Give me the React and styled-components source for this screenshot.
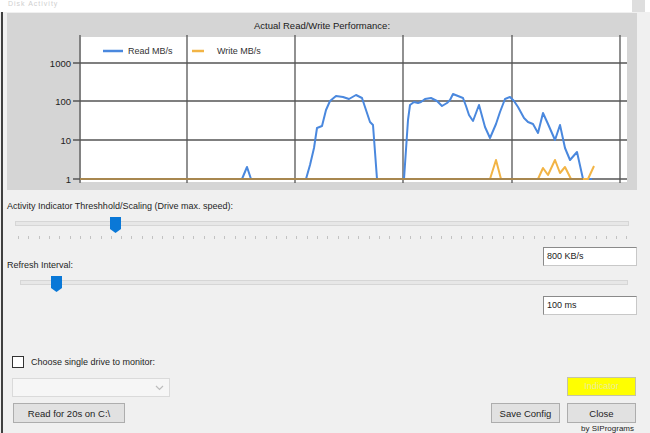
import React from 'react';
import styled, { createGlobalStyle } from 'styled-components';

const GlobalStyle = createGlobalStyle`
  html, body { margin: 0; padding: 0; background: #f0f0f0; overflow: hidden; }
  body { font-family: "Liberation Sans", Arial, sans-serif; }
  * { box-sizing: border-box; }
`;

const Window = styled.div`
  width: 650px;
  height: 433px;
  overflow: hidden;
  display: flex;
  flex-direction: column;
  background: #f0f0f0;
  color: #1e1e1e;
  font-size: 9px;
`;

const TitleBar = styled.div`
  height: 12px;
  flex: none;
  background: #ffffff;
  display: flex;
  align-items: flex-start;
  justify-content: space-between;
  overflow: hidden;
`;

const TitleText = styled.span`
  margin: 0 0 0 8px;
  font-size: 7px;
  line-height: 8px;
  color: #cfcfcf;
  letter-spacing: 1px;
`;

const TitleButton = styled.span`
  width: 13px;
  height: 12px;
  margin-right: 5px;
  background: #dedede;
`;

const Body = styled.div`
  flex: 1;
  display: flex;
  min-height: 0;
  margin-left: 1px;
  border-left: 2px solid #404040;
`;

const Content = styled.div`
  width: 630px;
  margin-left: 4px;
  display: flex;
  flex-direction: column;
`;

const ChartPanel = styled.div`
  margin-top: 1px;
  height: 177px;
  background: #d5d5d5;
  display: flex;
  flex-direction: column;
`;

const ChartTitle = styled.div`
  height: 22px;
  padding-top: 4px;
  line-height: 18px;
  text-align: center;
  font-size: 9.5px;
  color: #1a1a1a;
`;

const ChartSvg = styled.svg`
  display: block;
  width: 630px;
  height: 155px;
  font-family: "Liberation Sans", Arial, sans-serif;
`;

const SettingLabel = styled.div`
  margin-top: ${p => p.$mt || 0}px;
  margin-bottom: ${p => p.$mb || 0}px;
  line-height: 12px;
  height: 12px;
  white-space: nowrap;
`;

const SliderBox = styled.div`
  position: relative;
  height: ${p => p.$h}px;
  padding-top: ${p => p.$pt}px;
`;

const Track = styled.div`
  height: 5px;
  margin: 0 ${p => p.$r}px 0 ${p => p.$l}px;
  background: #e7e7e7;
  border: 1px solid #d6d6d6;
`;

const TickRow = styled.div`
  display: flex;
  justify-content: ${p => (p.$gap ? 'flex-start' : 'space-between')};
  gap: ${p => (p.$gap ? p.$gap - 1 : 0)}px;
  margin: ${p => p.$mt}px ${p => p.$r}px 0 ${p => p.$l}px;
  height: 3px;
`;

const Tick = styled.span`
  width: 1px;
  height: 3px;
  background: #c2c2c2;
  margin-left: ${p => (p.$last ? 'auto' : '0')};
`;

const ThumbSvg = styled.svg`
  position: absolute;
  top: ${p => p.$top}px;
  width: 11px;
  height: 16px;
`;

const FieldRow = styled.div`
  display: flex;
  justify-content: ${p => p.$justify || 'space-between'};
  align-items: flex-end;
  height: 19px;
  margin-top: ${p => p.$mt}px;
`;

const TextBox = styled.div`
  width: 94px;
  height: 19px;
  background: #ffffff;
  border: 1px solid #8a8a8a;
  border-right-color: #c8c8c8;
  border-bottom-color: #c8c8c8;
  padding-left: 3px;
  line-height: 17px;
  font-size: 9px;
  color: #222;
`;

const Bottom = styled.div`
  display: flex;
  justify-content: space-between;
  align-items: flex-start;
  margin-top: 40px;
`;

const LeftCol = styled.div`
  display: flex;
  flex-direction: column;
  padding-left: 5px;
`;

const CheckRow = styled.label`
  display: flex;
  align-items: center;
  gap: 7px;
  height: 14px;
`;

const CheckBox = styled.span`
  width: 12px;
  height: 12px;
  background: #ffffff;
  border: 1px solid #333333;
`;

const Dropdown = styled.div`
  margin-top: 9px;
  width: 158px;
  height: 19px;
  background: #f6f6f6;
  border: 1px solid #dadada;
  display: flex;
  align-items: center;
  justify-content: flex-end;
  padding-right: 5px;
`;

const Button = styled.button`
  width: ${p => p.$w}px;
  height: 20px;
  margin: ${p => p.$m || '0'};
  background: #e1e1e1;
  border: 1px solid #adadad;
  font-family: "Liberation Sans", Arial, sans-serif;
  font-size: 9.5px;
  color: #1e1e1e;
  padding: 0;
`;

const RightCol = styled.div`
  display: flex;
  flex-direction: column;
  align-items: flex-end;
  margin-top: 22px;
  padding-right: 1px;
`;

const Indicator = styled.div`
  width: 69px;
  height: 19px;
  background: #ffff00;
  border: 1px solid #c4c4a8;
  text-align: center;
  line-height: 17px;
  font-size: 9px;
  color: #ecec9a;
`;

const ButtonRow = styled.div`
  display: flex;
  gap: 7px;
  margin-top: 7px;
`;

const Credit = styled.div`
  margin-top: 1px;
  padding-right: 2px;
  line-height: 9px;
  white-space: nowrap;
  font-size: 8px;
`;

const readPts = [
  [80,179],[242,179],[247,167],[251,179],[306,179],[310,165],[314,148],[317,128],[322,126],[326,110],
  [330,101],[336,96],[343,97],[349,99],[356,95],[362,98],[366,110],[370,122],[373,125],[377,179],
  [404,179],[408,120],[410,105],[414,102],[418,103],[421,102],[425,99],[431,98],[437,101],[442,106],
  [447,103],[450,100],[453,94],[458,96],[463,98],[466,106],[469,115],[473,121],[479,105],[485,127],
  [490,138],[496,124],[500,112],[505,99],[510,97],[514,101],[518,107],[524,118],[528,122],[533,124],
  [538,133],[543,113],[548,124],[555,140],[560,125],[565,148],[570,160],[577,152],[583,179],[592,179]
];

const writePts = [
  [80,179],[490,179],[496,160],[501,179],[538,179],[543,168],[548,175],[555,160],[560,173],
  [565,167],[571,179],[588,179],[594,166]
];

const pts = arr => arr.map(([x, y]) => `${x},${y}`).join(' ');

const vLines = [80, 187, 295, 403, 512, 620];
const hLines = [[63, '1000'], [101, '100'], [140, '10'], [179, '1']];

function Chart() {
  return (
    <ChartSvg viewBox="7 35 630 155">
      <rect x="81" y="37" width="546" height="145" fill="#ffffff" />
      {vLines.map(x => (
        <line key={x} x1={x} y1="35" x2={x} y2="183" stroke="#555" strokeWidth="1.3" />
      ))}
      {hLines.map(([y, t]) => (
        <g key={y}>
          <line x1="73" y1={y} x2="627" y2={y} stroke="#555" strokeWidth="1.3" />
          <text x="71" y={y + 3.5} textAnchor="end" fontSize="9.5" fill="#222">{t}</text>
        </g>
      ))}
      <line x1="103" y1="51" x2="123" y2="51" stroke="#4a88de" strokeWidth="2.5" />
      <text x="128" y="54" fontSize="9" fill="#333">Read MB/s</text>
      <line x1="192" y1="51" x2="204" y2="51" stroke="#f2b445" strokeWidth="2.5" />
      <text x="217" y="54" fontSize="9" fill="#333">Write MB/s</text>
      <polyline points={pts(readPts)} fill="none" stroke="#4a88de" strokeWidth="2" strokeLinejoin="round" />
      <polyline points={pts(writePts)} fill="none" stroke="#f2b445" strokeWidth="2" strokeLinejoin="round" />
      <line x1="80" y1="179" x2="583" y2="179" stroke="#a8874f" strokeWidth="2" />
    </ChartSvg>
  );
}

function Thumb({ left, top }) {
  return (
    <ThumbSvg $top={top} style={{ left }} viewBox="0 0 11 16">
      <polygon points="0,0 11,0 11,12 5.5,16 0,12" fill="#0a78d7" />
    </ThumbSvg>
  );
}

export default function App() {
  const ticks1 = Array.from({ length: 60 });
  const ticks2 = Array.from({ length: 10 });
  return (
    <Window>
      <GlobalStyle />
      <TitleBar>
        <TitleText>Disk Activity</TitleText>
        <TitleButton />
      </TitleBar>
      <Body>
        <Content>
          <ChartPanel>
            <ChartTitle>Actual Read/Write Performance:</ChartTitle>
            <Chart />
          </ChartPanel>

          <SettingLabel $mt={10}>Activity Indicator Threshhold/Scaling (Drive max. speed):</SettingLabel>
          <SliderBox $h={30} $pt={9}>
            <Track $l={8} $r={8} />
            <TickRow $mt={10} $l={11} $r={9}>
              {ticks1.map((_, i) => <Tick key={i} />)}
            </TickRow>
            <Thumb left={103} top={5} />
          </SliderBox>

          <FieldRow $mt={6}>
            <SettingLabel $mb={-5}>Refresh Interval:</SettingLabel>
            <TextBox>800 KB/s</TextBox>
          </FieldRow>
          <SliderBox $h={33} $pt={14}>
            <Track $l={13} $r={9} />
            <TickRow $mt={11} $l={18} $r={9} $gap={63}>
              {ticks2.map((_, i) => <Tick key={i} />)}
              <Tick $last />
            </TickRow>
            <Thumb left={44} top={10} />
          </SliderBox>
          <FieldRow $mt={-3} $justify="flex-end">
            <TextBox>100 ms</TextBox>
          </FieldRow>

          <Bottom>
            <LeftCol>
              <CheckRow>
                <CheckBox />
                <span>Choose single drive to monitor:</span>
              </CheckRow>
              <Dropdown>
                <svg width="9" height="6" viewBox="0 0 9 6">
                  <polyline points="1,1 4.5,4.5 8,1" fill="none" stroke="#bdbdbd" strokeWidth="1.2" />
                </svg>
              </Dropdown>
              <Button $w={112} $m="6px 0 0 1px">Read for 20s on C:\</Button>
            </LeftCol>
            <RightCol>
              <Indicator>Indicator</Indicator>
              <ButtonRow>
                <Button $w={69}>Save Config</Button>
                <Button $w={69}>Close</Button>
              </ButtonRow>
              <Credit>by SIPrograms</Credit>
            </RightCol>
          </Bottom>
        </Content>
      </Body>
    </Window>
  );
}
